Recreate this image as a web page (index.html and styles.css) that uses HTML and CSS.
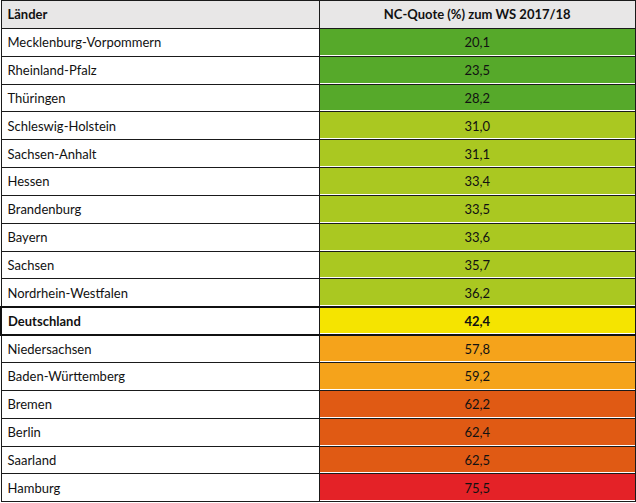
FILE: index.html
```html
<!DOCTYPE html>
<html lang="de">
<head>
<meta charset="utf-8">
<title>NC-Quote</title>
<link rel="stylesheet" href="styles.css">
</head>
<body>
<table class="nc">
  <thead>
    <tr><th class="land">Länder</th><th class="val">NC-Quote (%) zum WS 2017/18</th></tr>
  </thead>
  <tbody>
    <tr><td class="land">Mecklenburg-Vorpommern</td><td class="val c-green">20,1</td></tr>
    <tr><td class="land">Rheinland-Pfalz</td><td class="val c-green">23,5</td></tr>
    <tr><td class="land">Thüringen</td><td class="val c-green">28,2</td></tr>
    <tr><td class="land">Schleswig-Holstein</td><td class="val c-lime">31,0</td></tr>
    <tr><td class="land">Sachsen-Anhalt</td><td class="val c-lime">31,1</td></tr>
    <tr><td class="land">Hessen</td><td class="val c-lime">33,4</td></tr>
    <tr><td class="land">Brandenburg</td><td class="val c-lime">33,5</td></tr>
    <tr><td class="land">Bayern</td><td class="val c-lime">33,6</td></tr>
    <tr><td class="land">Sachsen</td><td class="val c-lime">35,7</td></tr>
    <tr><td class="land">Nordrhein-Westfalen</td><td class="val c-lime">36,2</td></tr>
    <tr class="total"><td class="land">Deutschland</td><td class="val c-yellow">42,4</td></tr>
    <tr><td class="land">Niedersachsen</td><td class="val c-orange">57,8</td></tr>
    <tr><td class="land">Baden-Württemberg</td><td class="val c-orange">59,2</td></tr>
    <tr><td class="land">Bremen</td><td class="val c-dark">62,2</td></tr>
    <tr><td class="land">Berlin</td><td class="val c-dark">62,4</td></tr>
    <tr><td class="land">Saarland</td><td class="val c-dark">62,5</td></tr>
    <tr><td class="land">Hamburg</td><td class="val c-red">75,5</td></tr>
  </tbody>
</table>
</body>
</html>
```

FILE: styles.css
```css
html, body {
  margin: 0;
  padding: 0;
  background: #ffffff;
}

.nc {
  border-collapse: collapse;
  width: 636px;
  table-layout: fixed;
  font-family: Lato, "Liberation Sans", sans-serif;
  font-size: 13px;
  color: #111;
}

.nc th,
.nc td {
  border: 1px solid #1a1a1a;
  height: 27.85px;
  padding: 0 6px;
  line-height: 16px;
  box-sizing: border-box;
}

.nc th {
  background: #e8e7e7;
  font-weight: bold;
}

.nc .land {
  width: 318px;
  text-align: left;
}

.nc .val {
  text-align: center;
}

.nc td.val {
  box-shadow: inset 0 -1px 0 #ffffff;
}

.nc .total td {
  border-top: 2px solid #111;
  border-bottom: 2px solid #111;
  font-weight: bold;
}

.nc .total td.land {
  border-left: 2px solid #111;
}

.c-green { background: #56a92a; }
.c-lime { background: #aac821; }
.c-yellow { background: #f5e400; }
.c-orange { background: #f5a31b; }
.c-dark { background: #e05a14; }
.c-red { background: #e42227; }
```
